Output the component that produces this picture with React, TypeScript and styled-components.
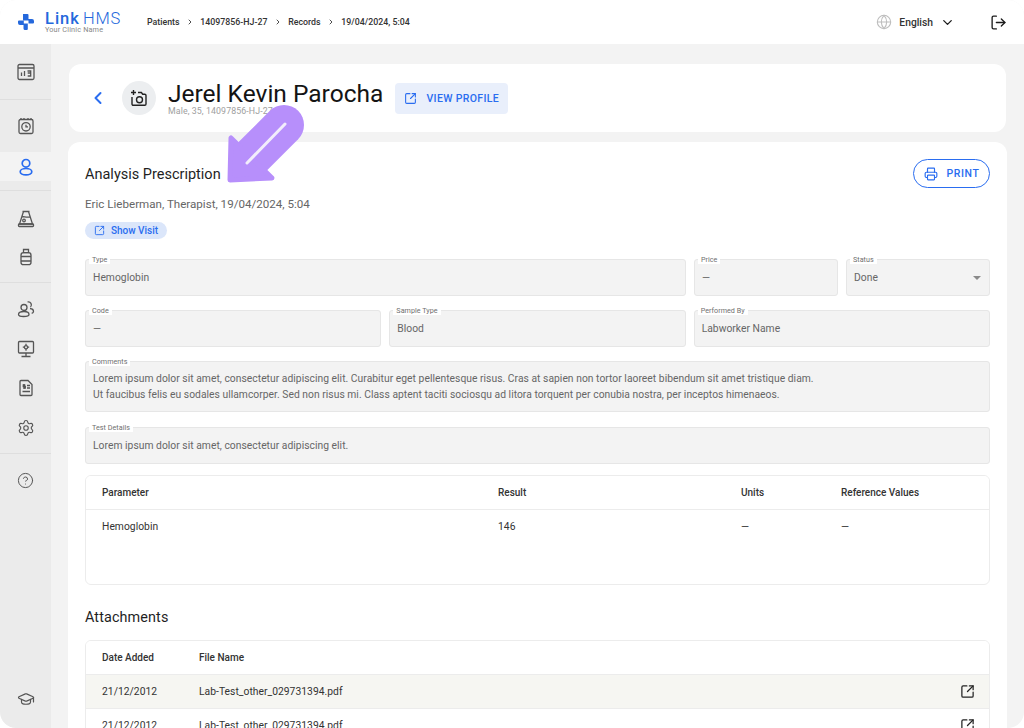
import React from "react";
import styled, { createGlobalStyle } from "styled-components";
import { ChevronDown, ChevronLeft, ChevronRight, CircleHelp, Globe, GraduationCap, LogOut, Printer, Settings, SquareArrowOutUpRight } from "lucide-react";

const Global = createGlobalStyle`
  html, body { margin: 0; padding: 0; background: #fff; }
  body { font-family: Roboto, "Liberation Sans", sans-serif; color: #1b1b1b; }
  * { box-sizing: border-box; }
`;

const Page = styled.div`
  width: 1024px; height: 728px; overflow: hidden; position: relative;
  background: #f3f3f3; border-radius: 16px; display: grid;
  grid-template-rows: 44px 684px; grid-template-columns: 51px 973px;
`;
const Header = styled.header`
  grid-column: 1 / 3; background: #fff; display: flex; align-items: center;
  padding: 0 17px 0 17px;
`;
const Brand = styled.div`display: flex; align-items: center; gap: 10px; width: 130px;`;
const BrandText = styled.div`display: flex; flex-direction: column; margin-top: 1px;`;
const BrandName = styled.div`
  font-size: 16.5px; line-height: 14px; color: #2468dc; white-space: nowrap;
  b { font-weight: 500; margin-right: 3px; letter-spacing: 1px; }
  span { font-weight: 300; letter-spacing: .8px; }
`;
const BrandSub = styled.div`font-size: 7.3px; line-height: 8px; color: #888; letter-spacing: .15px; white-space: nowrap;`;
const Crumbs = styled.nav`display: flex; align-items: center; gap: 4.4px; font-size: 8.8px; color: #333; font-weight: 500;
  svg { margin: 0 2px; color: #333; }`;
const HeaderRight = styled.div`margin-left: auto; display: flex; align-items: center;`;
const Lang = styled.div`display: flex; align-items: center; font-size: 10.3px; font-weight: 500; color: #333; margin-right: 35px;
  svg:first-child { color: #bdbdbd; margin-right: 7px; }
  svg:last-child { color: #222; margin-left: 7px; }`;
const Side = styled.aside`background: #ebebeb; display: flex; flex-direction: column; border-bottom-left-radius: 16px; height: 684px;`;
const SideGroup = styled.div<{ $h: number }>`
  height: ${p => p.$h}px; display: flex; flex-direction: column; align-items: center;
  border-bottom: 1px solid #dedede; color: #555;
`;
const SideBottom = styled.div`margin-top: auto; height: 58px; display: flex; align-items: center; justify-content: center; color: #555;`;
const SideItem = styled.div<{ $active?: boolean; $h?: number }>`
  width: 100%; height: ${p => p.$h ?? 29}px; display: flex; align-items: center; justify-content: center; flex-shrink: 0;
  background: ${p => p.$active ? "#f3f3f3" : "transparent"}; color: ${p => p.$active ? "#2a6df0" : "#555"};
`;
const Main = styled.main`padding: 20px 17px 0 17px; display: flex; flex-direction: column; gap: 10px; min-width: 0; height: 684px;`;
const TopCard = styled.section`
  height: 68px; margin: 0 1px; background: #fff; border-radius: 12px; display: flex; align-items: center; padding: 0 0 0 19px; flex-shrink: 0;
`;
const Back = styled.div`color: #2a6df0; display: flex; width: 34px; `;
const Avatar = styled.div`width: 34px; height: 34px; border-radius: 50%; background: #eceef0; display: flex; align-items: center; justify-content: center; color: #222;`;
const NameBlock = styled.div`margin-left: 12px; display: flex; flex-direction: column; margin-top: 1px;`;
const Name = styled.h1`margin: 0; font-size: 24.5px; line-height: 24px; font-weight: 400; color: #141414; white-space: nowrap;`;
const Sub = styled.div`font-size: 8.8px; line-height: 10px; color: #a0a0a0; letter-spacing: .1px;`;
const ViewProfile = styled.div`
  margin-left: 12px; height: 31px; width: 113px; background: #e9effb; border-radius: 4px; color: #2a6df0;
  display: flex; align-items: center; justify-content: center; gap: 9px; font-size: 10.5px; font-weight: 500; letter-spacing: .35px;
`;
const Card = styled.section`
  flex: 1; background: #fff; border-radius: 12px 12px 0 0; padding: 17px 17px 0; display: flex; flex-direction: column; min-height: 0; overflow: hidden;
`;
const TitleRow = styled.div`display: flex; align-items: center; justify-content: space-between; height: 29px; flex-shrink: 0;`;
const Title = styled.h2`margin: 0; padding-top: 1px; font-size: 14.5px; font-weight: 400; color: #1f1f1f;`;
const PrintBtn = styled.div`
  width: 77px; height: 29px; border: 1.5px solid #2a6df0; border-radius: 15px; color: #2a6df0;
  display: flex; align-items: center; justify-content: center; gap: 9px; font-size: 10.5px; font-weight: 500; letter-spacing: .6px;
`;
const Author = styled.div`margin-top: 9px; font-size: 11.6px; line-height: 14px; color: #666; flex-shrink: 0;`;
const Chip = styled.div`
  margin-top: 11px; width: 82px; height: 17px; background: #dbe6fa; border-radius: 9px; color: #2a6df0; flex-shrink: 0;
  display: flex; align-items: center; justify-content: center; gap: 6px; font-size: 10px; font-weight: 500;
`;
const FieldRow = styled.div<{ $cols: string; $h: number; $top: number }>`
  display: grid; grid-template-columns: ${p => p.$cols}; gap: 8px; height: ${p => p.$h}px; margin-top: ${p => p.$top}px; flex-shrink: 0;
`;
const Field = styled.div`
  position: relative; background: #f3f3f3; border: 1px solid #e6e6e6; border-radius: 3px; padding: 0 7px;
  display: flex; align-items: center; justify-content: space-between; font-size: 10.3px; line-height: 16px; color: #666; letter-spacing: .03px; white-space: nowrap; min-width: 0;
`;
const Legend = styled.span`
  position: absolute; left: 3px; top: -4px; background: #fff; padding: 0 3px; font-size: 7.2px; line-height: 8px; color: #6f6f6f;
`;
const Caret = styled.span`width: 0; height: 0; border-left: 4px solid transparent; border-right: 4px solid transparent; border-top: 4px solid #8a8a8a; margin-right: 1px;`;
const TableBox = styled.div<{ $h?: number; $top: number }>`
  margin-top: ${p => p.$top}px; border: 1px solid #ececec; border-radius: 6px; flex-shrink: 0; overflow: hidden;
  ${p => p.$h ? `height: ${p.$h}px;` : ""}
`;
const TRow = styled.div<{ $cols: string; $tint?: boolean }>`
  display: grid; grid-template-columns: ${p => p.$cols}; align-items: center; height: 33px; padding: 0 14px 0 16px;
  font-size: 10.3px; color: #333; letter-spacing: .03px; background: ${p => p.$tint ? "#f6f6f2" : "#fff"};
  & + & { border-top: 1px solid #ececec; height: 34px; }
`;
const TH = styled.div`font-weight: 500; color: #333; font-size: 10px; letter-spacing: 0;`;
const OpenCell = styled.div`display: flex; justify-content: flex-end; color: #222;`;
const SubTitle = styled.h2`margin: 24px 0 13px; font-size: 14.4px; line-height: 18px; font-weight: 400; color: #1f1f1f; letter-spacing: .1px; flex-shrink: 0;`;
const ArrowWrap = styled.svg`position: absolute; left: 224px; top: 102px; pointer-events: none;`;

const Logo = () => (
  <svg width="18" height="18" viewBox="0 0 18 18"><path fill="#2468dc" d="M6 1h4.500a1 1 0 0 1 1 1v4h3.500a2 2 0 0 1 2 2v1.500a1 1 0 0 1-1 1h-4.500v-3H7a1 1 0 0 1-1-1V1zM1 8.500a1 1 0 0 1 1-1h4.800v3h4v5.500a1 1 0 0 1-1 1H8a1.500 1.500 0 0 1-1.500-1.500V12H3a2 2 0 0 1-2-2V8.500z" /></svg>
);
const IcReport = () => (
  <svg width="18" height="18" viewBox="0 0 18 18" fill="none" stroke="currentColor" strokeWidth="1.300"><rect x="1" y="1.500" width="16" height="15" rx="1.500" /><path d="M1 5h16M4.500 13V9.500M7.500 13V8M10.500 8h3.200v2h-3m0 3h3v-3" /></svg>
);
const IcCal = () => (
  <svg width="18" height="18" viewBox="0 0 18 18" fill="none" stroke="currentColor" strokeWidth="1.300"><rect x="2" y="2.500" width="14" height="14" rx="1.500" /><path d="M4 1v2M7 1v2M11 1v2M14 1v2" /><circle cx="9" cy="9.800" r="4.200" /><path d="M9 7.800v2h2" /></svg>
);
const IcUser = () => (
  <svg width="18" height="18" viewBox="0 0 18 18" fill="none" stroke="currentColor" strokeWidth="1.700"><circle cx="9" cy="5.300" r="3.800" /><ellipse cx="9" cy="13.700" rx="5.800" ry="3.200" /></svg>
);
const IcFlask = () => (
  <svg width="18" height="18" viewBox="0 0 18 18" fill="none" stroke="currentColor" strokeWidth="1.300"><path d="M5.500 1.500h7M6.500 1.500l-4 12.500h13l-4-12.500M5 7c2-1 3 .8 8 0" /><circle cx="7" cy="10.500" r="1.300" /><rect x="1.500" y="14" width="15" height="2.500" rx=".8" /></svg>
);
const IcBottle = () => (
  <svg width="18" height="18" viewBox="0 0 18 18" fill="none" stroke="currentColor" strokeWidth="1.300"><path d="M6.500 1.500h5v3.200h-5z" /><rect x="4" y="4.700" width="10" height="12" rx="2.500" /><path d="M4 8.500h10M4 13h10" /></svg>
);
const IcUsers = () => (
  <svg width="18" height="18" viewBox="0 0 18 18" fill="none" stroke="currentColor" strokeWidth="1.300"><circle cx="7" cy="7.500" r="3" /><path d="M1.500 14.500c0-2 2.500-3 5.500-3s5 1 5 3-2.500 2-5.500 2-5-.5-5-2z" /><path d="M10.500 2a3 3 0 0 1 3 5M13 8.500c2 .2 3.500 1.300 3.500 3 0 1-.7 1.500-1.800 1.800" /></svg>
);
const IcMonitor = () => (
  <svg width="18" height="18" viewBox="0 0 18 18" fill="none" stroke="currentColor" strokeWidth="1.300"><rect x="1.500" y="1.500" width="15" height="11.500" rx="1" /><path d="M9 13v3.500M4.500 16.500h9" /><circle cx="9" cy="7.200" r="1.600" /><path d="M9 3.800v1.700M9 9v1.700M5.800 7.200h1.600M10.600 7.200h1.600" /></svg>
);
const IcDoc = () => (
  <svg width="18" height="18" viewBox="0 0 18 18" fill="none" stroke="currentColor" strokeWidth="1.300"><path d="M3 2.500a1 1 0 0 1 1-1h7l4 4v10a1 1 0 0 1-1 1H4a1 1 0 0 1-1-1z" /><path d="M10 6.500h3M10 9h3M5.500 12.500h7.500M7 5v5M8.300 6H6.300v1.500h2V9h-2" /></svg>
);
const IcCamera = () => (
  <svg width="18" height="18" viewBox="0 0 18 18" fill="none" stroke="currentColor" strokeWidth="1.400"><path d="M3.500 1v5M1 3.500h5" /><path d="M2 8v7a1.300 1.300 0 0 0 1.300 1.300h11.400A1.300 1.300 0 0 0 16 15V6.500a1.300 1.300 0 0 0-1.300-1.300h-2L11.400 3.500H8" /><circle cx="9.500" cy="10.700" r="3" /></svg>
);

const cols1 = "396px 243px 100px 1fr";
const cols2 = "97px 1fr 40px";

export default function App() {
  return (
    <Page>
      <Global />
      <Header>
        <Brand>
          <Logo />
          <BrandText>
            <BrandName><b>Link</b><span>HMS</span></BrandName>
            <BrandSub>Your Clinic Name</BrandSub>
          </BrandText>
        </Brand>
        <Crumbs>
          <span>Patients</span><ChevronRight size={8} strokeWidth={2.6} />
          <span>14097856-HJ-27</span><ChevronRight size={8} strokeWidth={2.6} />
          <span>Records</span><ChevronRight size={8} strokeWidth={2.6} />
          <span>19/04/2024, 5:04</span>
        </Crumbs>
        <HeaderRight>
          <Lang><Globe size={16} strokeWidth={1.6} />English<ChevronDown size={15} strokeWidth={2.2} /></Lang>
          <LogOut size={17} strokeWidth={1.9} color="#1c1c1c" />
        </HeaderRight>
      </Header>
      <Side>
        <SideGroup $h={56}><SideItem $h={55}><IcReport /></SideItem></SideGroup>
        <SideGroup $h={91}>
          <SideItem $h={52}><IcCal /></SideItem>
          <SideItem $active><IcUser /></SideItem>
        </SideGroup>
        <SideGroup $h={92}>
          <SideItem $h={56}><IcFlask /></SideItem>
          <SideItem $h={20}><IcBottle /></SideItem>
        </SideGroup>
        <SideGroup $h={171}>
          <SideItem $h={52}><IcUsers /></SideItem>
          <SideItem $h={27}><IcMonitor /></SideItem>
          <SideItem $h={52}><IcDoc /></SideItem>
          <SideItem $h={27}><Settings size={18} strokeWidth={1.5} /></SideItem>
        </SideGroup>
        <SideItem $h={52}><CircleHelp size={17} strokeWidth={1.4} /></SideItem>
        <SideBottom><GraduationCap size={18} strokeWidth={1.6} /></SideBottom>
      </Side>
      <Main>
        <TopCard>
          <Back><ChevronLeft size={20} strokeWidth={2.4} /></Back>
          <Avatar><IcCamera /></Avatar>
          <NameBlock>
            <Name>Jerel Kevin Parocha</Name>
            <Sub>Male, 35, 14097856-HJ-27</Sub>
          </NameBlock>
          <ViewProfile><SquareArrowOutUpRight size={13} strokeWidth={2} />VIEW PROFILE</ViewProfile>
        </TopCard>
        <Card>
          <TitleRow>
            <Title>Analysis Prescription</Title>
            <PrintBtn><Printer size={14} strokeWidth={2} />PRINT</PrintBtn>
          </TitleRow>
          <Author>Eric Lieberman, Therapist, 19/04/2024, 5:04</Author>
          <Chip><SquareArrowOutUpRight size={11} strokeWidth={2} />Show Visit</Chip>
          <FieldRow $cols="1fr 144px 144px" $h={37} $top={20}>
            <Field><Legend>Type</Legend>Hemoglobin</Field>
            <Field><Legend>Price</Legend>—</Field>
            <Field><Legend>Status</Legend>Done<Caret /></Field>
          </FieldRow>
          <FieldRow $cols="1fr 1fr 1fr" $h={37} $top={14}>
            <Field><Legend>Code</Legend>—</Field>
            <Field><Legend>Sample Type</Legend>Blood</Field>
            <Field><Legend>Performed By</Legend>Labworker Name</Field>
          </FieldRow>
          <FieldRow $cols="1fr" $h={51} $top={14}>
            <Field><Legend>Comments</Legend><span>Lorem ipsum dolor sit amet, consectetur adipiscing elit. Curabitur eget pellentesque risus. Cras at sapien non tortor laoreet bibendum sit amet tristique diam.<br />Ut faucibus felis eu sodales ullamcorper. Sed non risus mi. Class aptent taciti sociosqu ad litora torquent per conubia nostra, per inceptos himenaeos.</span></Field>
          </FieldRow>
          <FieldRow $cols="1fr" $h={37} $top={15}>
            <Field><Legend>Test Details</Legend>Lorem ipsum dolor sit amet, consectetur adipiscing elit.</Field>
          </FieldRow>
          <TableBox $h={110} $top={11}>
            <TRow $cols={cols1}><TH>Parameter</TH><TH>Result</TH><TH>Units</TH><TH>Reference Values</TH></TRow>
            <TRow $cols={cols1}><div>Hemoglobin</div><div>146</div><div>—</div><div>—</div></TRow>
          </TableBox>
          <SubTitle>Attachments</SubTitle>
          <TableBox $top={0}>
            <TRow $cols={cols2}><TH>Date Added</TH><TH>File Name</TH><div /></TRow>
            <TRow $cols={cols2} $tint><div>21/12/2012</div><div>Lab-Test_other_029731394.pdf</div><OpenCell><SquareArrowOutUpRight size={15} strokeWidth={2} /></OpenCell></TRow>
            <TRow $cols={cols2}><div>21/12/2012</div><div>Lab-Test_other_029731394.pdf</div><OpenCell><SquareArrowOutUpRight size={15} strokeWidth={2} /></OpenCell></TRow>
          </TableBox>
        </Card>
      </Main>
      <ArrowWrap width="84" height="84" viewBox="0 0 84 84" fill="none">
        <path d="M60 23 L28 55" stroke="#b78ffb" strokeWidth="40" strokeLinecap="round" />
        <path d="M7 36 L6 78 L48 76 Z" fill="#b78ffb" stroke="#b78ffb" strokeWidth="5" strokeLinejoin="round" />
        <path d="M61 22 L23 61" stroke="#f2edfb" strokeWidth="3" strokeLinecap="round" />
      </ArrowWrap>
    </Page>
  );
}
